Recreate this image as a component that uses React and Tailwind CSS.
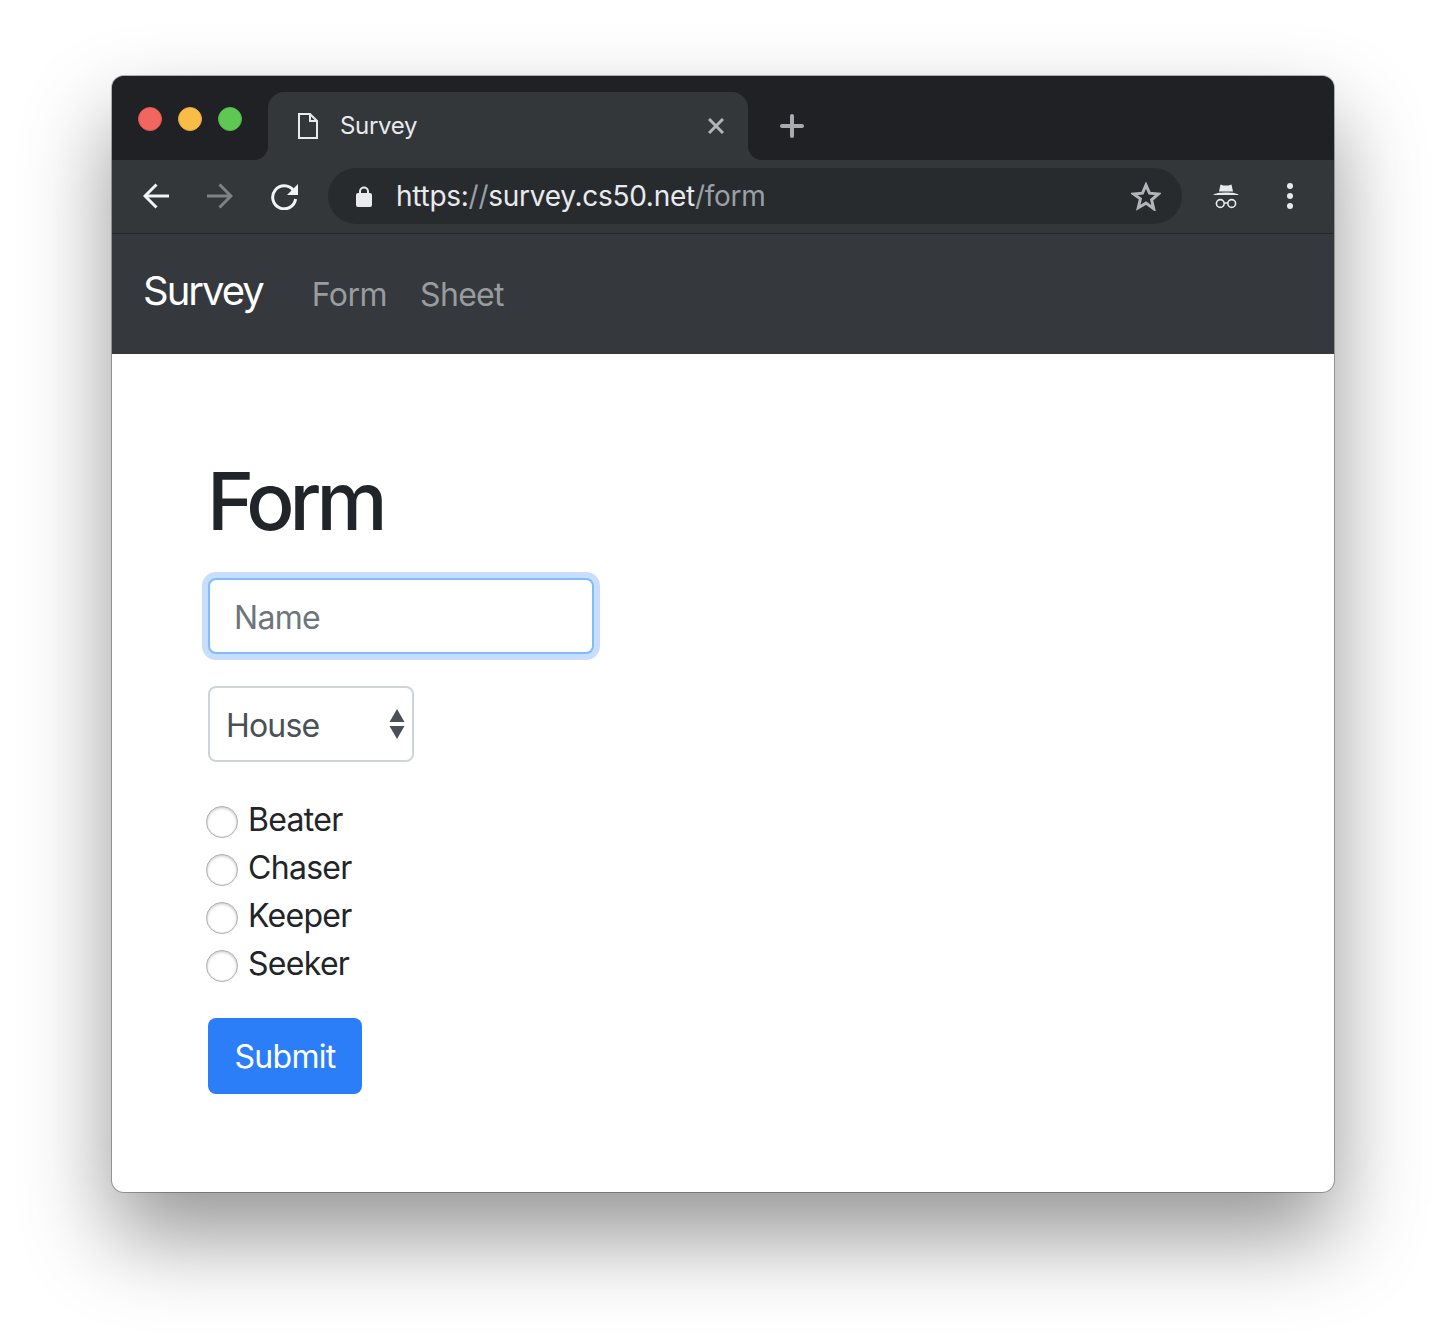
import React from 'react';

const font = 'font-[Inter,"Liberation_Sans",sans-serif]';

function BackIcon({ className }) {
  return (
    <svg className={className} width="26" height="26" viewBox="0 0 26 26" fill="none" stroke="currentColor" strokeWidth="3">
      <path d="M26 13H2.5" />
      <path d="M13.5 1.5L2 13l11.5 11.5" />
    </svg>
  );
}

function ForwardIcon({ className }) {
  return (
    <svg className={className} width="26" height="26" viewBox="0 0 26 26" fill="none" stroke="currentColor" strokeWidth="3">
      <path d="M0 13h23.5" />
      <path d="M12.5 1.5L24 13 12.5 24.5" />
    </svg>
  );
}

function ReloadIcon({ className }) {
  return (
    <svg className={className} width="27" height="27" viewBox="0 0 27 27" fill="none">
      <path d="M22.5 7.5A11.5 11.5 0 1 0 24.6 16" stroke="currentColor" strokeWidth="3" />
      <path d="M27 1v11H16z" fill="currentColor" />
    </svg>
  );
}

function LockIcon() {
  return (
    <svg width="16" height="21" viewBox="0 0 16 21" fill="none">
      <path d="M4 8V5.5a4 4 0 0 1 8 0V8" stroke="#e8eaed" strokeWidth="2" />
      <rect x="0" y="7" width="16" height="14" rx="2" fill="#e8eaed" />
    </svg>
  );
}

function StarIcon() {
  return (
    <svg width="30" height="29" viewBox="0 0 30 29" fill="none">
      <path d="M15 3l3.5 8.2 8.9.8-6.8 5.9 2.1 8.8L15 21.1l-7.7 4.6 2.1-8.8L2.6 12l8.9-.8z" stroke="#b1b4b8" strokeWidth="3" />
    </svg>
  );
}

function IncognitoIcon() {
  return (
    <svg width="26" height="25" viewBox="0 0 26 25" fill="none">
      <path d="M6 7.5L7.5 0.5 10.5 1.5h5l3-1L20 7.5z" fill="#e8eaed" />
      <path d="M0 11c3-1.6 6-2.4 13-2.4S23 9.400 26 11z" fill="#e8eaed" />
      <circle cx="7.300" cy="19.500" r="3.900" stroke="#e8eaed" strokeWidth="1.600" />
      <circle cx="18.700" cy="19.500" r="3.900" stroke="#e8eaed" strokeWidth="1.600" />
      <path d="M11 19h4" stroke="#e8eaed" strokeWidth="1.600" />
    </svg>
  );
}

function DocIcon() {
  return (
    <svg width="20" height="26" viewBox="0 0 20 26" fill="none" stroke="#e8eaed" strokeWidth="2">
      <path d="M1 1h11l7 7v17H1z" />
      <path d="M12 1v7h7" />
    </svg>
  );
}

function Radio({ label }) {
  return (
    <label className="flex h-12 items-center">
      <input
        type="radio"
        name="position"
        className="-ml-0.5 mt-2 h-8 w-8 appearance-none rounded-full border border-[#adadad] bg-white shadow-[inset_0_1px_3px_rgba(0,0,0,0.25)]"
      />
      <span className="ml-[10px] mt-1 text-[32px] leading-[48px] tracking-[-0.7px] text-[#212529]">{label}</span>
    </label>
  );
}

export default function App() {
  return (
    <div className={`h-[1340px] w-[1446px] overflow-hidden bg-white pl-[112px] pt-[76px] ${font}`}>
      <div className="w-[1222px] overflow-hidden rounded-[12px] bg-white shadow-[0_44px_88px_rgba(0,0,0,0.42),0_0_0_1px_rgba(0,0,0,0.28)]">
        {/* Tab strip */}
        <div className="flex h-[84px] bg-[#33373a]">
          <div className="flex w-[156px] gap-4 rounded-br-[14px] bg-[#202124] pl-[26px] pt-[31px]">
            <span className="h-6 w-6 rounded-full border border-[#e0564e] bg-[#f1675f]" />
            <span className="h-6 w-6 rounded-full border border-[#e5a83c] bg-[#f8bd47]" />
            <span className="h-6 w-6 rounded-full border border-[#52b648] bg-[#5fc855]" />
          </div>
          <div className="flex w-[480px] flex-col bg-[#202124] pt-4">
            <div className="flex h-[68px] items-center rounded-t-[16px] bg-[#33373a] pl-[30px] pr-[24px]">
              <DocIcon />
              <span className="ml-[22px] text-[24px] leading-none tracking-[-0.3px] text-[#e8eaed]">Survey</span>
              <svg className="ml-auto" width="16" height="16" viewBox="0 0 16 16" stroke="#b1b4b8" strokeWidth="3">
                <path d="M1 1l14 14M15 1L1 15" />
              </svg>
            </div>
          </div>
          <div className="flex flex-1 rounded-bl-[14px] bg-[#202124] pl-[32px] pt-[38px]">
            <svg width="24" height="24" viewBox="0 0 24 24" stroke="#a8abaf" strokeWidth="4" strokeLinecap="round">
              <path d="M12 2v20M2 12h20" />
            </svg>
          </div>
        </div>

        {/* Toolbar */}
        <div className="flex h-[74px] items-center border-b border-[#25282a] bg-[#33373a] pb-[1px] pl-[31px]">
          <BackIcon className="text-[#f1f3f4]" />
          <ForwardIcon className="ml-[38px] text-[#7f8285]" />
          <ReloadIcon className="ml-[38px] text-[#f1f3f4]" />
          <div className="ml-[30px] flex h-14 w-[854px] items-center rounded-[28px] bg-[#282b2e] pl-[28px] pr-[21px]">
            <LockIcon />
            <span className="ml-6 text-[28px] leading-none tracking-[-0.27px] text-[#e8eaed]">
              https:<span className="text-[#9aa0a6]">//</span>survey.cs50.net<span className="text-[#9aa0a6]">/form</span>
            </span>
            <span className="ml-auto">
              <StarIcon />
            </span>
          </div>
          <span className="ml-[31px]">
            <IncognitoIcon />
          </span>
          <div className="ml-12 flex flex-col gap-1">
            <span className="h-1.5 w-1.5 rounded-full bg-[#e8eaed]" />
            <span className="h-1.5 w-1.5 rounded-full bg-[#e8eaed]" />
            <span className="h-1.5 w-1.5 rounded-full bg-[#e8eaed]" />
          </div>
        </div>

        {/* Navbar */}
        <nav className="flex h-[120px] items-center bg-[#35393d] pl-[31px]">
          <a className="mb-[7px] text-[40px] leading-none tracking-[-2px] text-white">Survey</a>
          <a className="ml-[49px] mt-[2px] text-[32px] leading-none tracking-[-0.5px] text-[#999c9f]">Form</a>
          <a className="ml-[33px] mt-[2px] text-[32px] leading-none tracking-[-0.7px] text-[#999c9f]">Sheet</a>
        </nav>

        {/* Page */}
        <main className="flex flex-col items-start pb-[98px] pl-[96px] pt-[96px]">
          <h1 className="-ml-px mb-[29px] mt-[3px] text-[80px] font-medium leading-[96px] tracking-[-5px] text-[#212529]">Form</h1>
          <input
            placeholder="Name"
            className="mb-8 h-[76px] w-[386px] rounded-lg border-2 border-[#80bdff] bg-white px-6 pt-0.5 text-[32px] tracking-[-0.7px] shadow-[0_0_0_6px_#c7defe] outline-none placeholder:text-[#6c757d]"
          />
          <div className="relative mb-8 w-[206px]">
            <select className="h-[76px] w-full appearance-none rounded-lg border-2 border-[#ced4da] bg-white pl-4 pt-1 text-[32px] tracking-[-0.8px] text-[#495057] outline-none">
              <option>House</option>
            </select>
            <svg className="absolute right-[9px] top-[23px]" width="16" height="30" viewBox="0 0 16 30" fill="#495057">
              <path d="M8 0l7.5 13H.5z" />
              <path d="M8 30L.5 17h15z" />
            </svg>
          </div>
          <div className="mb-8 flex flex-col">
            <Radio label="Beater" />
            <Radio label="Chaser" />
            <Radio label="Keeper" />
            <Radio label="Seeker" />
          </div>
          <button className="h-[76px] w-[154px] rounded-lg bg-[#2b7ef8] pt-0.5 text-[32px] tracking-[-0.7px] text-white">Submit</button>
        </main>
      </div>
    </div>
  );
}
